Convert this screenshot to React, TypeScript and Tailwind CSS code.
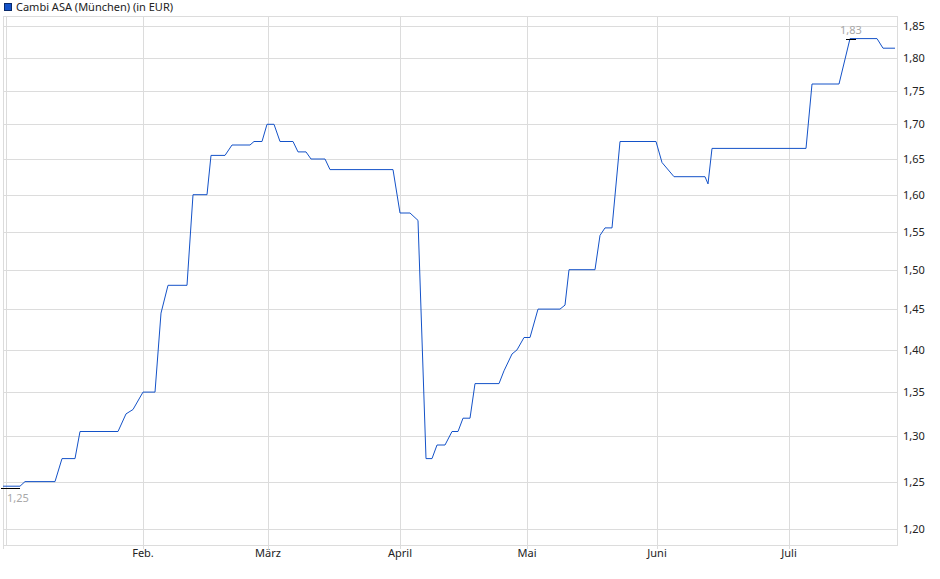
const W = 940;
const H = 579;

// log scale: 1,20 at y=529, 1,85 at y=26
const yOf = (v: number) => 529 - 1162 * Math.log(v / 1.2);

const data: [number, number][] = [
  [3, 1.245], [20, 1.245], [25, 1.25], [55, 1.25], [62, 1.275], [75, 1.275],
  [80, 1.305], [118, 1.305], [126, 1.325], [133, 1.33], [143, 1.35], [155, 1.35],
  [161, 1.445], [168, 1.48], [187, 1.48], [193, 1.6], [207, 1.6], [211, 1.655],
  [225, 1.655], [232, 1.67], [250, 1.67], [254, 1.675], [262, 1.675], [267, 1.7],
  [274, 1.7], [280, 1.675], [293, 1.675], [298, 1.66], [306, 1.66], [311, 1.65],
  [325, 1.65], [330, 1.635], [393, 1.635], [400, 1.575], [410, 1.575], [418, 1.565],
  [426, 1.275], [432, 1.275], [437, 1.29], [445, 1.29], [452, 1.305], [458, 1.305],
  [463, 1.32], [470, 1.32], [475, 1.36], [499, 1.36], [504, 1.375], [512, 1.395],
  [517, 1.4], [524, 1.415], [530, 1.415], [538, 1.45], [560, 1.45], [565, 1.455],
  [569, 1.5], [595, 1.5], [600, 1.545], [605, 1.555], [612, 1.555], [620, 1.675],
  [656, 1.675], [662, 1.645], [674, 1.625], [700, 1.625], [705, 1.625], [708, 1.615],
  [712, 1.665], [806, 1.665], [812, 1.76], [839, 1.76], [850, 1.83], [877, 1.83],
  [883, 1.815], [895, 1.815],
];

const levels = [1.85, 1.8, 1.75, 1.7, 1.65, 1.6, 1.55, 1.5, 1.45, 1.4, 1.35, 1.3, 1.25, 1.2];
const months: [string, number][] = [
  ["Feb.", 143], ["März", 268], ["April", 400], ["Mai", 527], ["Juni", 657], ["Juli", 789],
];

const fmt = (v: number) => v.toFixed(2).replace(".", ",");

export default function App() {
  const points = data.map(([x, v]) => `${x},${yOf(v).toFixed(1)}`).join(" ");

  return (
    <div className="relative w-[940px] h-[579px] bg-white font-['Liberation_Sans',Arial,sans-serif] text-[11px] text-[#222]">
      {/* legend */}
      <div className="absolute left-[4px] top-0 flex items-center gap-[4px] h-[14px]">
        <span className="w-[8px] h-[8px] bg-[#1452c8] border border-[#0a2a6a]" />
        <span>Cambi ASA (München) (in EUR)</span>
      </div>

      <svg width={W} height={H} className="block">
        {/* grid */}
        {levels.map((v) => (
          <line key={v} x1={3} x2={897} y1={Math.round(yOf(v)) + 0.5} y2={Math.round(yOf(v)) + 0.5} stroke="#dcdcdc" />
        ))}
        {months.map(([m, x]) => (
          <line key={m} x1={x + 0.5} x2={x + 0.5} y1={16} y2={549} stroke="#dcdcdc" />
        ))}
        <line x1={6.5} x2={6.5} y1={16} y2={545} stroke="#dcdcdc" />
        <line x1={3.5} x2={3.5} y1={16} y2={549} stroke="#dcdcdc" />
        <rect x={3.5} y={16.5} width={894} height={529} fill="none" stroke="#dcdcdc" />

        {/* axis labels */}
        {levels.map((v) => (
          <text key={v} x={903} y={Math.round(yOf(v)) + 4} fontSize={11} fill="#222">{fmt(v)}</text>
        ))}
        {months.map(([m, x]) => (
          <text key={m} x={x} y={557} fontSize={11} fill="#222" textAnchor="middle">{m}</text>
        ))}

        {/* price */}
        <polyline points={points} fill="none" stroke="#1452c8" strokeWidth={1} />
        <line x1={1} x2={20} y1={488.5} y2={488.5} stroke="#000" />
        <line x1={846} x2={856} y1={39.5} y2={39.5} stroke="#000" />
        <text x={7} y={502} fontSize={11} fill="#a8a8a8">1,25</text>
        <text x={840} y={34} fontSize={11} fill="#a8a8a8">1,83</text>
      </svg>
    </div>
  );
}
